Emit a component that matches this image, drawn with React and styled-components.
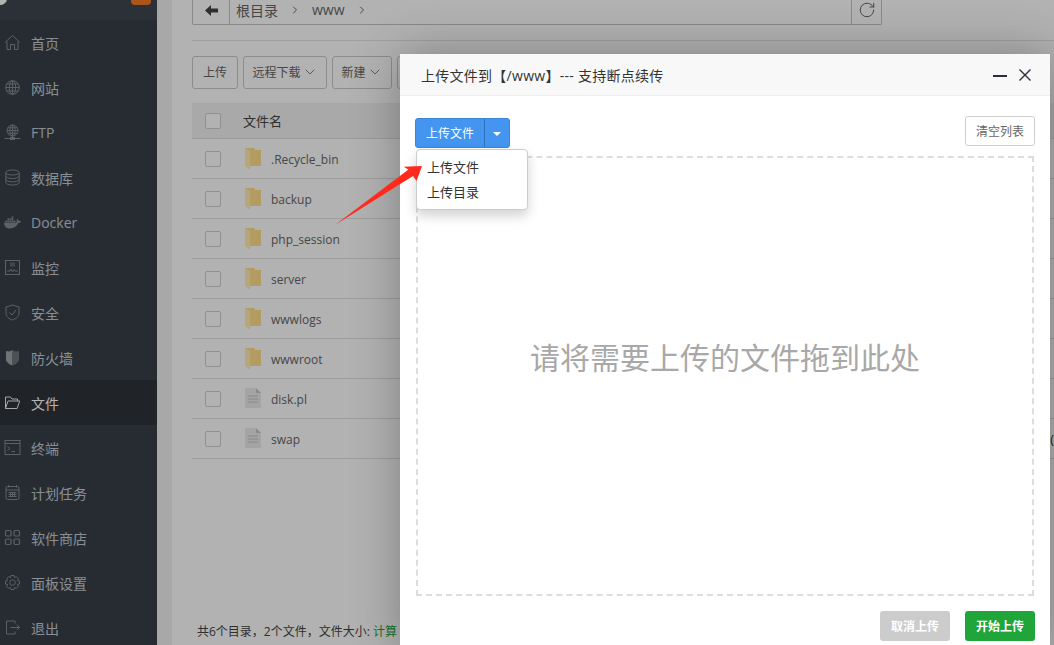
import React from "react";
import styled, { createGlobalStyle } from "styled-components";
import { FaDocker } from "react-icons/fa";
import { RotateCw, ChevronDown, ChevronRight } from "lucide-react";

const FONT = `"Open Sans", "Noto Sans CJK SC", sans-serif`;

const Global = createGlobalStyle`
  html, body { margin: 0; padding: 0; height: 100%; overflow: hidden; }
  body { font-family: ${FONT}; }
  * { box-sizing: border-box; }
`;

const Page = styled.div`
  position: relative;
  width: 1054px;
  height: 645px;
  overflow: hidden;
  display: flex;
  background: #f1f1f1;
`;

const Sidebar = styled.aside`
  width: 157px;
  flex: none;
  background: #38404a;
  display: flex;
  flex-direction: column;
`;

const SideTop = styled.div`
  height: 20px;
  flex: none;
  background: #3f4751;
  position: relative;
  overflow: hidden;
`;

const LogoEdge = styled.span`
  position: absolute;
  left: -6px;
  top: -8px;
  width: 13px;
  height: 13px;
  border-radius: 50%;
  background: #fff;
`;

const Badge = styled.span`
  position: absolute;
  left: 131px;
  top: -6px;
  width: 20px;
  height: 11px;
  border-radius: 4px;
  background: #f57a24;
`;

const NavItem = styled.div`
  height: 45px;
  flex: none;
  display: flex;
  align-items: center;
  gap: 10px;
  padding-left: 4px;
  font-size: 14px;
  color: ${(p) => (p.$active ? "#ffffff" : "#c3ccd3")};
  background: ${(p) => (p.$active ? "#2e343b" : "transparent")};
`;

const NavIcon = styled.span`
  width: 17px;
  height: 17px;
  flex: none;
  display: flex;
  align-items: center;
  justify-content: center;
  color: ${(p) => (p.$active ? "#f0f0f0" : "#868b90")};
`;

const Main = styled.main`
  flex: 1;
  min-width: 0;
  margin-left: 15px;
  background: #ffffff;
  padding-left: 20px;
  display: flex;
  flex-direction: column;
  overflow: hidden;
`;

const PathBar = styled.div`
  width: 690px;
  height: 25px;
  flex: none;
  display: flex;
  align-items: stretch;
  border: 1px solid #c4c4c4;
  border-top: none;
  border-radius: 0 0 2px 2px;
`;

const BackCell = styled.div`
  width: 37px;
  flex: none;
  display: flex;
  align-items: center;
  justify-content: center;
  border-right: 1px solid #c4c4c4;
  padding-bottom: 3px;
`;

const Crumbs = styled.div`
  flex: 1;
  display: flex;
  align-items: center;
  gap: 11px;
  padding: 0 0 5px 6px;
  font-size: 14px;
  color: #666;
`;

const RefreshCell = styled.div`
  width: 30px;
  flex: none;
  display: flex;
  align-items: center;
  justify-content: center;
  border-left: 1px solid #c4c4c4;
  padding-bottom: 4px;
  color: #555;
`;

const Rule = styled.div`
  height: 1px;
  flex: none;
  margin-top: 15px;
  background: #e6e6e6;
`;

const Toolbar = styled.div`
  display: flex;
  gap: 5px;
  margin-top: 15px;
  flex: none;
`;

const ToolButton = styled.div`
  height: 33px;
  width: ${(p) => p.$w}px;
  flex: none;
  display: flex;
  align-items: center;
  justify-content: center;
  gap: 1px;
  padding-bottom: 2px;
  border: 1px solid #c9c9c9;
  border-radius: 3px;
  font-size: 12px;
  color: #666;
  background: #fff;
`;

const TableHead = styled.div`
  margin-top: 14px;
  height: 36px;
  width: 862px;
  flex: none;
  display: flex;
  align-items: center;
  padding-left: 13px;
  background: #f2f2f2;
  border-bottom: 1px solid #e0e0e0;
  font-size: 13px;
  color: #444;
`;

const Row = styled.div`
  height: 40px;
  width: 862px;
  flex: none;
  display: flex;
  align-items: center;
  padding-left: 13px;
  border-bottom: 1px solid #e2e2e2;
  font-size: 12px;
  color: #666;
`;

const Check = styled.span`
  width: 16px;
  height: 16px;
  flex: none;
  border: 1px solid #cfcfcf;
  border-radius: 2px;
  background: #fff;
`;

const HeadLabel = styled.span`
  margin-left: 22px;
`;

const FileGlyph = styled.span`
  margin-left: 24px;
  width: 16px;
  height: 24px;
  flex: none;
  display: flex;
`;

const FileName = styled.span`
  margin-left: 10px;
  padding-top: 2px;
`;

const RowTail = styled.span`
  margin-left: auto;
  font-size: 13px;
  color: #333;
`;

const Footer = styled.div`
  margin-top: auto;
  padding: 0 0 5px 5px;
  font-size: 12px;
  line-height: 17px;
  color: #444;
  white-space: nowrap;
`;

const Calc = styled.span`
  color: #20a53a;
`;

const Dim = styled.div`
  position: absolute;
  inset: 0;
  background: rgba(0, 0, 0, 0.3);
`;

const Modal = styled.section`
  position: absolute;
  left: 400px;
  top: 54px;
  width: 650px;
  height: 600px;
  background: #fff;
  box-shadow: 1px 1px 50px rgba(0, 0, 0, 0.3);
  display: flex;
  flex-direction: column;
  border-radius: 2px 2px 0 0;
`;

const ModalHead = styled.header`
  height: 42px;
  flex: none;
  display: flex;
  align-items: center;
  justify-content: space-between;
  padding: 0 19px 0 21px;
  background: #f8f8f8;
  border-bottom: 1px solid #eee;
  font-size: 14px;
  color: #333;
`;

const ModalTitle = styled.span`
  letter-spacing: 0.27px;
`;

const WinControls = styled.div`
  display: flex;
  align-items: center;
  gap: 12px;
`;

const MinBar = styled.span`
  width: 14px;
  height: 2px;
  background: #2e2d3c;
  margin-top: 3px;
`;

const ModalBody = styled.div`
  flex: 1;
  min-height: 0;
  display: flex;
  flex-direction: column;
  padding: 20px 15px 13px;
`;

const BodyTop = styled.div`
  position: relative;
  height: 30px;
  flex: none;
  display: flex;
  justify-content: space-between;
  margin-bottom: 10px;
`;

const SplitGroup = styled.div`
  display: flex;
  height: 30px;
  margin-top: 2px;
  font-size: 12px;
  color: #fff;
  background: #4495ef;
  border: 1px solid #3a85d8;
  border-radius: 3px;
`;

const SplitMain = styled.div`
  width: 69px;
  display: flex;
  align-items: center;
  justify-content: center;
  border-right: 1px solid #2f6fb5;
`;

const SplitCaret = styled.div`
  width: 24px;
  display: flex;
  align-items: center;
  justify-content: center;
`;

const Caret = styled.span`
  width: 0;
  height: 0;
  margin-top: 2px;
  border-left: 4px solid transparent;
  border-right: 4px solid transparent;
  border-top: 4px solid #fff;
`;

const ClearButton = styled.div`
  width: 70px;
  height: 30px;
  display: flex;
  align-items: center;
  justify-content: center;
  border: 1px solid #cfcfcf;
  border-radius: 3px;
  font-size: 12px;
  color: #666;
  background: #fff;
`;

const DropZone = styled.div`
  flex: 1;
  min-height: 0;
  margin: 0 1px;
  padding-bottom: 40px;
  border: 2px dashed #dddddd;
  display: flex;
  align-items: center;
  justify-content: center;
  font-size: 30px;
  color: #a8a8a8;
`;

const ModalActions = styled.div`
  flex: none;
  display: flex;
  justify-content: flex-end;
  gap: 15px;
  margin-top: 15px;
`;

const ActionButton = styled.div`
  width: 70px;
  height: 30px;
  display: flex;
  align-items: center;
  justify-content: center;
  border-radius: 3px;
  font-size: 12px;
  font-weight: 700;
  color: #fff;
  background: ${(p) => p.$bg};
`;

const Menu = styled.div`
  position: absolute;
  left: 1px;
  top: 33px;
  width: 112px;
  height: 61px;
  padding-top: 4px;
  background: #fff;
  border: 1px solid #ccc;
  border-radius: 4px;
  box-shadow: 0 6px 12px rgba(0, 0, 0, 0.175);
  z-index: 2;
`;

const MenuItem = styled.div`
  height: 25px;
  padding-left: 10px;
  display: flex;
  align-items: center;
  font-size: 13px;
  color: #333;
`;

const ArrowMark = styled.svg`
  position: absolute;
  left: 330px;
  top: 160px;
  z-index: 5;
`;

const strokeIcon = {
  width: 17,
  height: 17,
  viewBox: "0 0 17 17",
  fill: "none",
  stroke: "currentColor",
  strokeWidth: 1,
};

const icons = {
  home: (
    <svg {...strokeIcon}>
      <path d="M1 8.5 8.5 1.5 16 8.5M3 7.5V15.5H6.5V10.5H10.5V15.5H14V7.5" />
    </svg>
  ),
  globe: (
    <svg {...strokeIcon}>
      <circle cx="8.5" cy="8.5" r="6.8" />
      <ellipse cx="8.5" cy="8.5" rx="3.2" ry="6.8" />
      <path d="M8.5 1.7V15.3M1.7 8.5H15.3M2.8 5H14.2M2.8 12H14.2" />
    </svg>
  ),
  ftp: (
    <svg {...strokeIcon}>
      <circle cx="8.5" cy="6.5" r="5.5" />
      <ellipse cx="8.5" cy="6.5" rx="2.6" ry="5.5" />
      <path d="M8.5 1V14M3 6.5H14M3.8 3.8H13.2M3.8 9.2H13.2M.5 14.5H16.5" />
      <rect x="6.5" y="13.5" width="4" height="2" fill="currentColor" />
    </svg>
  ),
  db: (
    <svg {...strokeIcon}>
      <ellipse cx="8.5" cy="3.5" rx="6.7" ry="2.5" />
      <path d="M1.8 3.5V13.5C1.8 15 5 16 8.5 16S15.2 15 15.2 13.5V3.5M1.8 7C1.8 8.5 5 9.5 8.5 9.5S15.2 8.5 15.2 7M1.8 10.3C1.8 11.8 5 12.8 8.5 12.8S15.2 11.8 15.2 10.3" />
    </svg>
  ),
  docker: <FaDocker size={17} />,
  monitor: (
    <svg {...strokeIcon}>
      <rect x="1.5" y="1.5" width="14" height="14" />
      <path d="M3 12H6L7 10 8.500 13 10 10.500 11 12H14" />
      <rect x="6" y="3.500" width="5" height="4" fill="currentColor" opacity=".5" stroke="none" />
    </svg>
  ),
  shield: (
    <svg {...strokeIcon}>
      <path d="M8.500 1 15 3V9C15 12.500 12 15 8.500 16 5 15 2 12.500 2 9V3Z" />
      <path d="M5.500 8.500 8 11 12 6" />
    </svg>
  ),
  firewall: (
    <svg width="17" height="17" viewBox="0 0 17 17">
      <path d="M8.500 1 5.500 2.500 2 2V10C2 13 5 15.500 8.500 16.500Z" fill="#a2a6aa" />
      <path d="M8.500 1 11.500 2.500 15 2V10C15 13 12 15.500 8.500 16.500Z" fill="#6f7478" />
    </svg>
  ),
  folder: (
    <svg {...strokeIcon}>
      <path d="M1.500 14.500V3H6.500L8 5H13.500V7M1.500 14.500H13L15.800 7H4Z" />
    </svg>
  ),
  terminal: (
    <svg {...strokeIcon}>
      <rect x="1" y="1.500" width="15" height="14" />
      <path d="M1 4.500H16" />
      <path d="M3.500 7.500 6 9.500 3.500 11.500M7.500 12.500H11" />
    </svg>
  ),
  calendar: (
    <svg {...strokeIcon}>
      <rect x="2" y="2.500" width="13" height="13" rx="1.500" />
      <path d="M2 6H15M4.500 1V3.500M12.500 1V3.500M4.500 8.500H12.500M4.500 10.500H12.500M4.500 12.500H12.500M6.500 8V13M8.500 8V13M10.500 8V13" />
    </svg>
  ),
  apps: (
    <svg {...strokeIcon} strokeWidth="1.200">
      <rect x="1.500" y="1.500" width="5.500" height="5.500" rx="1.200" />
      <rect x="10" y="1.500" width="5.500" height="5.500" rx="1.200" />
      <rect x="1.500" y="10" width="5.500" height="5.500" rx="1.200" />
      <rect x="10" y="10" width="5.500" height="5.500" rx="1.200" />
    </svg>
  ),
  gear: (
    <svg {...strokeIcon}>
      <circle cx="8.500" cy="8.500" r="2.800" />
      <path d="M7 1.500H10L10.500 3.500 12.300 2.700 14.400 4.700 13.500 6.500 15.500 7V10L13.500 10.500 14.400 12.300 12.300 14.400 10.500 13.500 10 15.500H7L6.500 13.500 4.700 14.400 2.600 12.300 3.500 10.500 1.500 10V7L3.500 6.500 2.600 4.700 4.700 2.700 6.500 3.500Z" />
    </svg>
  ),
  logout: (
    <svg {...strokeIcon}>
      <path d="M11 4.500V2H2.500V15H11V12.500M6.500 8.500H15.500M12.800 6 15.500 8.500 12.800 11" />
    </svg>
  ),
};

const nav = [
  ["home", "首页"],
  ["globe", "网站"],
  ["ftp", "FTP"],
  ["db", "数据库"],
  ["docker", "Docker"],
  ["monitor", "监控"],
  ["shield", "安全"],
  ["firewall", "防火墙"],
  ["folder", "文件", true],
  ["terminal", "终端"],
  ["calendar", "计划任务"],
  ["apps", "软件商店"],
  ["gear", "面板设置"],
  ["logout", "退出"],
];

const files = [
  ["dir", ".Recycle_bin"],
  ["dir", "backup"],
  ["dir", "php_session"],
  ["dir", "server"],
  ["dir", "wwwlogs"],
  ["dir", "wwwroot"],
  ["file", "disk.pl"],
  ["file", "swap", "("],
];

const FolderGlyph = () => (
  <svg width="16" height="24" viewBox="0 0 16 24">
    <path d="M0 1H9.500L10 3H16V19H5V6L0 1Z" fill="#ffe08c" />
    <path d="M0 1 5 4V23L0 19Z" fill="#fff0b4" />
  </svg>
);

const DocGlyph = () => (
  <svg width="16" height="24" viewBox="0 0 16 24">
    <path d="M0 1H11L16 6V21H0Z" fill="#ebebeb" />
    <path d="M11 1 16 6H11Z" fill="#c8c8c8" />
    <path d="M3 9H13M3 12H13M3 15H13" stroke="#c4c4c4" />
  </svg>
);

export default function App() {
  return (
    <Page>
      <Global />
      <Sidebar>
        <SideTop>
          <LogoEdge />
          <Badge />
        </SideTop>
        {nav.map(([icon, label, active]) => (
          <NavItem key={label} $active={active}>
            <NavIcon $active={active}>{icons[icon]}</NavIcon>
            {label}
          </NavItem>
        ))}
      </Sidebar>

      <Main>
        <PathBar>
          <BackCell>
            <svg width="13" height="11" viewBox="0 0 13 11">
              <path d="M6 0 0 5.500 6 11V7.500H13V3.500H6Z" fill="#444" />
            </svg>
          </BackCell>
          <Crumbs>
            <span>根目录</span>
            <ChevronRight size={12} />
            <span>www</span>
            <ChevronRight size={12} />
          </Crumbs>
          <RefreshCell>
            <RotateCw size={18} strokeWidth={1.2} />
          </RefreshCell>
        </PathBar>
        <Rule />
        <Toolbar>
          <ToolButton $w={46}>上传</ToolButton>
          <ToolButton $w={84}>
            远程下载
            <ChevronDown size={16} strokeWidth={1.2} />
          </ToolButton>
          <ToolButton $w={60}>
            新建
            <ChevronDown size={16} strokeWidth={1.2} />
          </ToolButton>
          <ToolButton $w={84} />
        </Toolbar>
        <TableHead>
          <Check />
          <HeadLabel>文件名</HeadLabel>
        </TableHead>
        {files.map(([kind, name, tail]) => (
          <Row key={name}>
            <Check />
            <FileGlyph>{kind === "dir" ? <FolderGlyph /> : <DocGlyph />}</FileGlyph>
            <FileName>{name}</FileName>
            {tail && <RowTail>{tail}</RowTail>}
          </Row>
        ))}
        <Footer>
          共6个目录，2个文件，文件大小: <Calc>计算</Calc>
        </Footer>
      </Main>

      <Dim />

      <Modal>
        <ModalHead>
          <ModalTitle>上传文件到【/www】--- 支持断点续传</ModalTitle>
          <WinControls>
            <MinBar />
            <svg width="12" height="12" viewBox="0 0 12 12" stroke="#2e2d3c" strokeWidth="1.4">
              <path d="M.5 .5 11.500 11.500M11.500 .5 .5 11.500" />
            </svg>
          </WinControls>
        </ModalHead>
        <ModalBody>
          <BodyTop>
            <SplitGroup>
              <SplitMain>上传文件</SplitMain>
              <SplitCaret>
                <Caret />
              </SplitCaret>
            </SplitGroup>
            <ClearButton>清空列表</ClearButton>
            <Menu>
              <MenuItem>上传文件</MenuItem>
              <MenuItem>上传目录</MenuItem>
            </Menu>
          </BodyTop>
          <DropZone>请将需要上传的文件拖到此处</DropZone>
          <ModalActions>
            <ActionButton $bg="#cccccc">取消上传</ActionButton>
            <ActionButton $bg="#20a53a">开始上传</ActionButton>
          </ModalActions>
        </ModalBody>
      </Modal>

      <ArrowMark width="100" height="70" viewBox="330 160 100 70">
        <path d="M335 225 408.500 169.500 403.500 166.800 422 166 416.500 181 413 176Z" fill="#ff2a1c" />
      </ArrowMark>
    </Page>
  );
}
